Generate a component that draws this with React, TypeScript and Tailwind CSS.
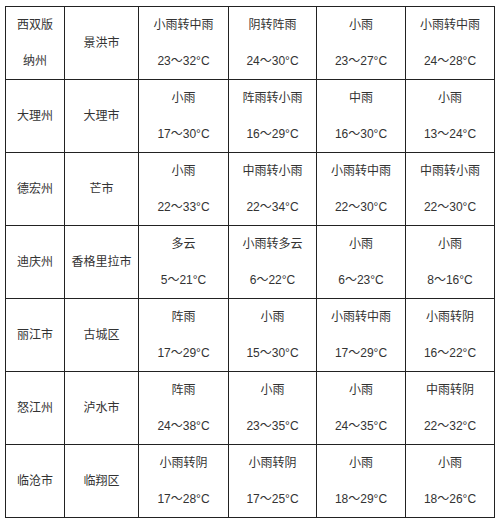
const rows: [string, string, [string, string][]][] = [
  ['西双版\n纳州', '景洪市', [['小雨转中雨', '23～32°C'], ['阴转阵雨', '24～30°C'], ['小雨', '23～27°C'], ['小雨转中雨', '24～28°C']]],
  ['大理州', '大理市', [['小雨', '17～30°C'], ['阵雨转小雨', '16～29°C'], ['中雨', '16～30°C'], ['小雨', '13～24°C']]],
  ['德宏州', '芒市', [['小雨', '22～33°C'], ['中雨转小雨', '22～34°C'], ['小雨转中雨', '22～30°C'], ['中雨转小雨', '22～30°C']]],
  ['迪庆州', '香格里拉市', [['多云', '5～21°C'], ['小雨转多云', '6～22°C'], ['小雨', '6～23°C'], ['小雨', '8～16°C']]],
  ['丽江市', '古城区', [['阵雨', '17～29°C'], ['小雨', '15～30°C'], ['小雨转中雨', '17～29°C'], ['小雨转阴', '16～22°C']]],
  ['怒江州', '泸水市', [['阵雨', '24～38°C'], ['小雨', '23～35°C'], ['小雨', '24～35°C'], ['中雨转阴', '22～32°C']]],
  ['临沧市', '临翔区', [['小雨转阴', '17～28°C'], ['小雨转阴', '17～25°C'], ['小雨', '18～29°C'], ['小雨', '18～26°C']]],
];

function Cell({ lines }: { lines: string[] }) {
  return (
    <div className="bg-white flex flex-col items-center justify-center text-center leading-[36px]">
      {lines.map((l, i) => (
        <div key={i} className="whitespace-nowrap">{l}</div>
      ))}
    </div>
  );
}

export default function App() {
  return (
    <div className="w-[500px] h-[525px] bg-white pt-[6px] pl-[5px]">
      <div
        className="inline-grid grid-cols-[58px_73px_89px_87px_88px_88px] auto-rows-[72px] gap-px p-px bg-[#222] text-[12px] text-[#333]"
        style={{ fontFamily: '"Liberation Sans", "Noto Sans CJK SC", sans-serif' }}
      >
        {rows.map(([pref, city, days], r) => (
          <div key={r} className="contents">
            <Cell lines={pref.split('\n')} />
            <Cell lines={[city]} />
            {days.map((d, i) => (
              <Cell key={i} lines={d} />
            ))}
          </div>
        ))}
      </div>
    </div>
  );
}
